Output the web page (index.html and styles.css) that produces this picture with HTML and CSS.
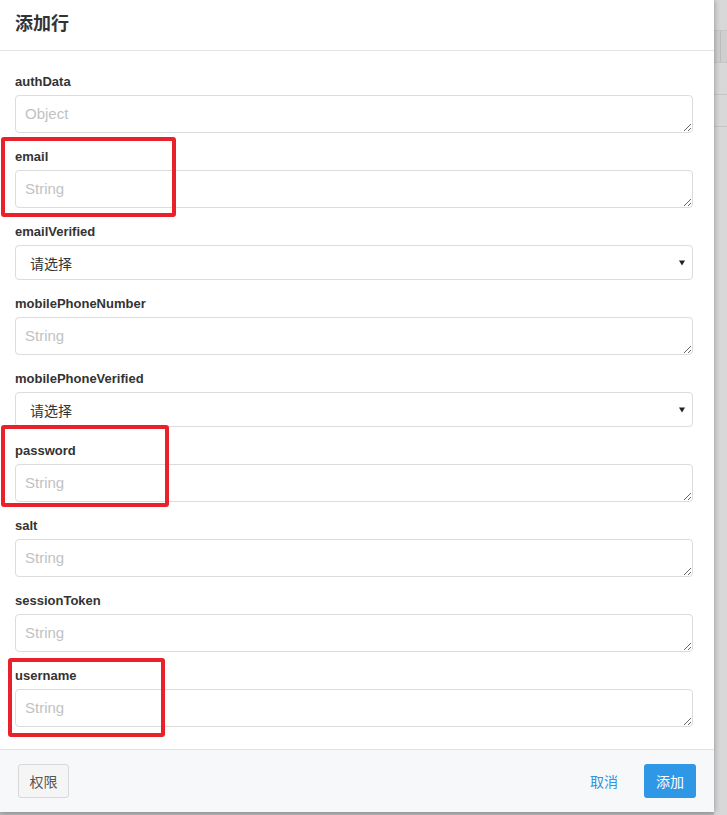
FILE: index.html
```html
<!DOCTYPE html>
<html lang="zh-CN">
<head>
<meta charset="utf-8">
<title>添加行</title>
<link rel="stylesheet" href="styles.css">
</head>
<body>
<div class="page">
  <div class="modal">
    <div class="modal-header">
      <h2 class="modal-title">添加行</h2>
    </div>
    <form class="modal-body">
      <div class="field">
        <label class="field-label">authData</label>
        <textarea class="field-input" placeholder="Object"></textarea>
      </div>
      <div class="field">
        <label class="field-label">email</label>
        <textarea class="field-input" placeholder="String"></textarea>
      </div>
      <div class="field">
        <label class="field-label">emailVerified</label>
        <select class="field-select"><option>请选择</option></select>
      </div>
      <div class="field">
        <label class="field-label">mobilePhoneNumber</label>
        <textarea class="field-input" placeholder="String"></textarea>
      </div>
      <div class="field">
        <label class="field-label">mobilePhoneVerified</label>
        <select class="field-select"><option>请选择</option></select>
      </div>
      <div class="field">
        <label class="field-label">password</label>
        <textarea class="field-input" placeholder="String"></textarea>
      </div>
      <div class="field">
        <label class="field-label">salt</label>
        <textarea class="field-input" placeholder="String"></textarea>
      </div>
      <div class="field">
        <label class="field-label">sessionToken</label>
        <textarea class="field-input" placeholder="String"></textarea>
      </div>
      <div class="field">
        <label class="field-label">username</label>
        <textarea class="field-input" placeholder="String"></textarea>
      </div>
    </form>
    <div class="modal-footer">
      <button class="btn btn-default" type="button">权限</button>
      <div class="footer-actions">
        <button class="btn btn-link" type="button">取消</button>
        <button class="btn btn-primary" type="button">添加</button>
      </div>
    </div>
    <div class="mark mark-email"></div>
    <div class="mark mark-password"></div>
    <div class="mark mark-username"></div>
  </div>
  <div class="backdrop">
    <div class="bd-row bd-top"></div>
    <div class="bd-row bd-head"><span class="bd-col"></span></div>
    <div class="bd-row"></div>
    <div class="bd-row"></div>
    <div class="bd-row bd-rest"></div>
  </div>
</div>
</body>
</html>
```

FILE: styles.css
```css
html, body {
  margin: 0;
  padding: 0;
  height: 100%;
}
body {
  background: #b9b9b9;
  font-family: "Liberation Sans", "Noto Sans CJK SC", sans-serif;
  color: #333;
  overflow: hidden;
}
.page {
  display: flex;
  height: 815px;
}
.modal {
  position: relative;
  width: 714px;
  height: 812px;
  flex: none;
  background: #fff;
  box-shadow: 0 0 6px rgba(0, 0, 0, 0.35);
  z-index: 2;
  display: flex;
  flex-direction: column;
}
.modal-header {
  height: 51px;
  box-sizing: border-box;
  border-bottom: 1px solid #e3e3e3;
  padding: 0 15px;
  display: flex;
  align-items: center;
}
.modal-title {
  margin: 0;
  font-family: "Noto Sans CJK SC", sans-serif;
  font-size: 18px;
  font-weight: 700;
  color: #333;
  position: relative;
  top: -3px;
}
.modal-body {
  flex: 1;
  padding: 22px 21px 0 15px;
}
.field {
  display: flex;
  flex-direction: column;
  margin-bottom: 15px;
}
.field-label {
  font-size: 13px;
  font-weight: 700;
  line-height: 18px;
  height: 18px;
  margin-bottom: 4px;
  color: #333;
}
.field-input {
  display: block;
  box-sizing: border-box;
  width: 678px;
  height: 38px;
  margin: 0;
  padding: 8px 9px;
  border: 1px solid #dcdcdc;
  border-radius: 4px;
  font-family: "Liberation Sans", "Noto Sans CJK SC", sans-serif;
  font-size: 15px;
  line-height: 20px;
  color: #333;
  background: #fff;
  outline: none;
}
.field-input::placeholder {
  color: #c2c2c2;
}
.field-select {
  display: block;
  box-sizing: border-box;
  width: 678px;
  height: 35px;
  margin: 0;
  padding: 0 14px;
  border: 1px solid #dcdcdc;
  border-radius: 4px;
  font-family: "Noto Sans CJK SC", sans-serif;
  font-size: 14px;
  color: #333;
  background-color: #fff;
  -webkit-appearance: none;
  appearance: none;
  background-image: url("data:image/svg+xml;utf8,<svg xmlns='http://www.w3.org/2000/svg' width='6' height='6' viewBox='0 0 6 6'><path d='M0 0.5H6L3 5.5Z' fill='%23222'/></svg>");
  background-repeat: no-repeat;
  background-position: right 7px center;
  outline: none;
}
.modal-footer {
  height: 63px;
  box-sizing: border-box;
  border-top: 1px solid #e2e2e2;
  background: #f7f8fa;
  padding: 0 18px;
  display: flex;
  align-items: center;
  justify-content: space-between;
}
.footer-actions {
  display: flex;
  align-items: center;
  gap: 14px;
}
.btn {
  box-sizing: border-box;
  height: 34px;
  width: 52px;
  padding: 0;
  border-radius: 3px;
  font-family: "Noto Sans CJK SC", sans-serif;
  font-size: 14px;
  cursor: pointer;
}
.btn-default {
  width: 51px;
  border: 1px solid #d9d9d9;
  background: #f5f5f5;
  color: #555;
}
.btn-link {
  border: none;
  background: transparent;
  color: #2e95e3;
}
.btn-primary {
  border: none;
  background: #2f98e6;
  color: #fff;
}
.mark {
  position: absolute;
  box-sizing: border-box;
  border: 4px solid #e8212b;
  border-radius: 3px;
}
.mark-email {
  left: 1px;
  top: 137px;
  width: 175px;
  height: 80px;
}
.mark-password {
  left: 1px;
  top: 425px;
  width: 168px;
  height: 82px;
}
.mark-username {
  left: 8px;
  top: 658px;
  width: 157px;
  height: 79px;
}
.backdrop {
  flex: 1;
  background: #d8d8d8;
  display: flex;
  flex-direction: column;
}
.bd-row {
  height: 32px;
  border-bottom: 1px solid #c6c6c6;
  box-sizing: border-box;
}
.bd-top {
  height: 31px;
}
.bd-head {
  height: 32px;
  background: #cfcfcf;
  display: flex;
}
.bd-col {
  width: 6px;
  border-right: 1px solid #bdbdbd;
}
.bd-rest {
  flex: 1;
  border-bottom: none;
}
```
